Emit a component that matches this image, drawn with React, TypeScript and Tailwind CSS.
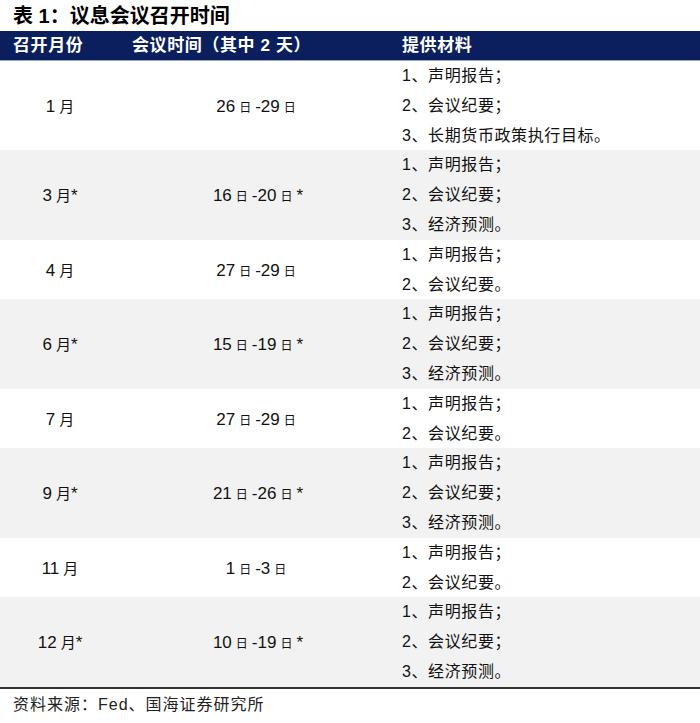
const FONT = { fontFamily: '"Liberation Sans", "Noto Sans CJK SC", sans-serif' };

type Row = { month: string; star?: boolean; from: string; to: string; items: string[] };

const BASE2 = ["声明报告；", "会议纪要。"];
const BASE3 = ["声明报告；", "会议纪要；", "经济预测。"];

const rows: Row[] = [
  { month: "1", from: "26", to: "29", items: ["声明报告；", "会议纪要；", "长期货币政策执行目标。"] },
  { month: "3", star: true, from: "16", to: "20", items: BASE3 },
  { month: "4", from: "27", to: "29", items: BASE2 },
  { month: "6", star: true, from: "15", to: "19", items: BASE3 },
  { month: "7", from: "27", to: "29", items: BASE2 },
  { month: "9", star: true, from: "21", to: "26", items: BASE3 },
  { month: "11", from: "1", to: "3", items: BASE2 },
  { month: "12", star: true, from: "10", to: "19", items: BASE3 },
];

function Day() {
  return <span className="text-[12px] mx-[4px]">日</span>;
}

export default function App() {
  return (
    <div className="w-[700px] h-[723px] bg-white text-[#111]" style={FONT}>
      {/* title */}
      <div className="h-[31px] flex items-center pl-[13px] text-[20px] font-bold text-black">
        表 1：议息会议召开时间
      </div>

      {/* header */}
      <div className="h-[30px] flex items-center bg-[#0b1f5e] border-b border-[#9aa7c4] text-white text-[17px] font-bold tracking-[0.6px]">
        <div className="w-[120px] pl-[13px]">召开月份</div>
        <div className="w-[270px] pl-[12px]">会议时间（其中 2 天）</div>
        <div className="flex-1 pl-[12px]">提供材料</div>
      </div>

      {rows.map((r, i) => (
        <div
          key={r.month}
          className={`flex items-center ${i % 2 === 1 ? "bg-[#f2f2f2]" : "bg-white"}`}
        >
          <div className="w-[120px] text-center text-[17px] pt-[2px]">
            {r.month}
            <span className="text-[15px] ml-[4px]">月</span>
            {r.star && "*"}
          </div>
          <div className="w-[270px] text-center text-[17px] pl-[6px] pt-[2px]">
            {r.from}
            <Day />-{r.to}
            <Day />
            {r.star && "*"}
          </div>
          <div className="flex-1 pl-[12px] text-[16px] tracking-[0.6px]">
            {r.items.map((t, k) => (
              <div key={k} className="h-[29.8px] leading-[29.8px]">
                {k + 1}、{t}
              </div>
            ))}
          </div>
        </div>
      ))}

      <div className="border-t-2 border-[#333] pl-[13px] pt-[4px] text-[16px] tracking-[1px] text-[#222]">
        资料来源：Fed、国海证券研究所
      </div>
    </div>
  );
}
